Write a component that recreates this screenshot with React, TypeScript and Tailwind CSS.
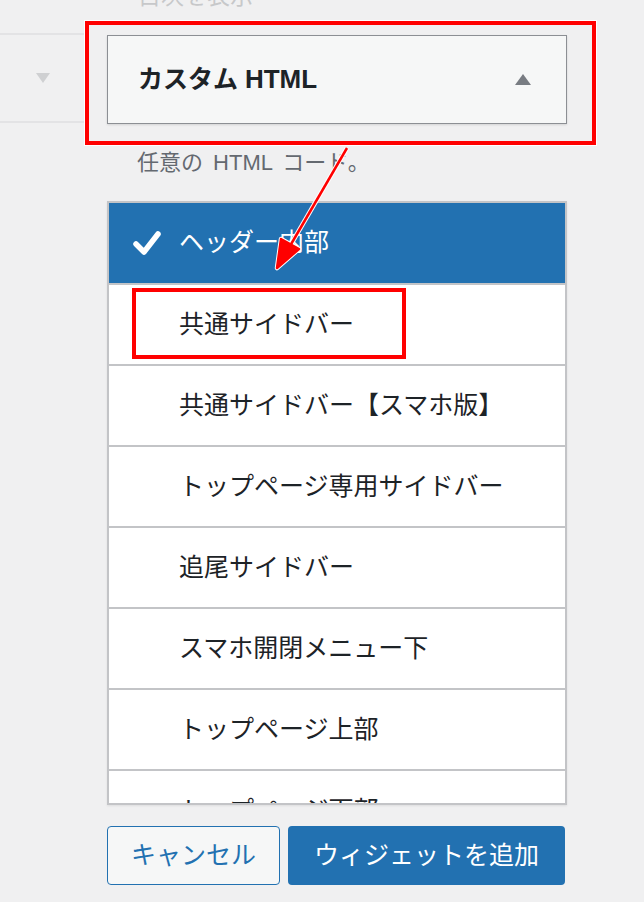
import React from "react"

const font = { fontFamily: '"Liberation Sans", "Noto Sans CJK JP", sans-serif' }

const items = [
    "共通サイドバー",
    "共通サイドバー【スマホ版】",
    "トップページ専用サイドバー",
    "追尾サイドバー",
    "スマホ開閉メニュー下",
    "トップページ上部",
    "トップページ下部",
]

const Check = () => (
    <svg width="28" height="24" viewBox="0 0 28 24" className="shrink-0">
        <path d="M3 13 L11 21 L25 3" fill="none" stroke="#fff" strokeWidth="5.5" strokeLinejoin="round" strokeLinecap="round" />
    </svg>
)

export default function App() {
    return (
        <div className="relative w-[644px] h-[902px] overflow-hidden bg-[#f0f0f1] text-[#1d2327]" style={font}>
            <div className="flex">
                {/* left column, previous widget */}
                <div className="w-[107px] shrink-0 pr-[22px]">
                    <div className="h-[35px] border-b-2 border-[#e3e3e5]" />
                    <div className="h-[88px] border-b-2 border-[#e3e3e5] flex items-center pl-[36px]">
                        <svg width="14" height="10" viewBox="0 0 14 10">
                            <path d="M0 0 H14 L7 10 Z" fill="#cfd0d2" />
                        </svg>
                    </div>
                </div>

                {/* widget form */}
                <div className="w-[460px] shrink-0 flex flex-col">
                    <div className="h-[35px] overflow-hidden pl-[31px]">
                        <p className="text-[23px] leading-[28px] -mt-[18px] text-[#c7c8ca]">目次を表示</p>
                    </div>

                    <div className="h-[89px] flex items-center justify-between border border-[#8c8f94] bg-[#f6f7f7] pl-[30px] pr-[35px] shadow-[0_1px_2px_rgba(0,0,0,0.12)]">
                        <h3 className="text-[25px] font-bold">
                            カスタム <span className="text-[26px]">HTML</span>
                        </h3>
                        <svg width="16" height="11" viewBox="0 0 16 11">
                            <path d="M8 0 L16 11 H0 Z" fill="#787c82" />
                        </svg>
                    </div>

                    <div className="h-[77px] flex items-center pl-[30px]">
                        <p className="text-[22px] text-[#646970] [word-spacing:4px]">任意の HTML コード。</p>
                    </div>

                    <div className="h-[604px] w-[460px] overflow-hidden border-2 border-[#c3c4c7] bg-white shadow-[0_1px_2px_rgba(0,0,0,0.08)]">
                        <div className="h-[80px] bg-[#2271b1] flex items-center gap-[18px] pl-[24px] text-white">
                            <Check />
                            <span className="text-[25px]">ヘッダー内部</span>
                        </div>
                        {items.map((item, i) => (
                            <div key={i} className="h-[81px] border-t-2 border-[#c3c4c7] flex items-center pl-[70px]">
                                <span className="text-[25px]">{item}</span>
                            </div>
                        ))}
                    </div>

                    <div className="mt-[21px] flex gap-[8px]">
                        <button className="w-[173px] h-[59px] rounded-[4px] border border-[#2271b1] bg-[#f6f7f7] text-[#2271b1] text-[25px]">
                            キャンセル
                        </button>
                        <button className="w-[277px] h-[59px] rounded-[4px] bg-[#2271b1] text-white text-[25px]">
                            ウィジェットを追加
                        </button>
                    </div>
                </div>
            </div>

            {/* annotations */}
            <div className="absolute left-[85px] top-[21px] w-[511px] h-[124px] border-[4px] border-[#ff0000] outline outline-1 outline-white" />
            <div className="absolute left-[132px] top-[288px] w-[274px] h-[71px] border-[4px] border-[#ff0000] outline outline-1 outline-white" />
            <svg className="absolute left-0 top-0" width="644" height="902" viewBox="0 0 644 902">
                <g stroke="#fff" strokeWidth="4.5" fill="#fff" strokeLinejoin="round">
                    <line x1="347" y1="148" x2="290" y2="246" />
                    <path d="M277 268 L281 239 L299 249 Z" />
                </g>
                <g stroke="#ff0000" strokeWidth="2.5" fill="#ff0000" strokeLinejoin="round">
                    <line x1="347" y1="148" x2="290" y2="246" />
                    <path d="M277 268 L281 239 L299 249 Z" />
                </g>
            </svg>
        </div>
    )
}
